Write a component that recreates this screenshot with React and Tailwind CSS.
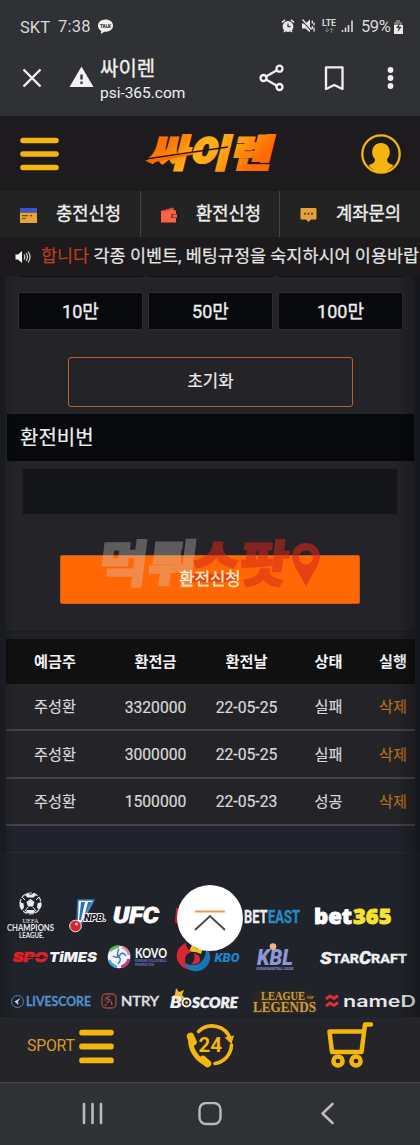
import React from "react";

const SANS = "font-[Roboto,'Noto_Sans_CJK_KR',sans-serif]";

/* Text inside a drawing, fitted to a given width */
function Label({ x, y, w, size, children, ...rest }) {
  return (
    <text x={x} y={y} fontSize={size} textLength={w} lengthAdjust="spacingAndGlyphs" {...rest}>
      {children}
    </text>
  );
}

function StatusBar() {
  return (
    <div className="flex h-[46px] items-start px-5 pt-[17px] text-[#d9d9db]">
      <span className="mt-px w-[38px] text-[16.500px] leading-5">SKT</span>
      <span className="w-[39px] text-[16.500px] leading-5 tracking-[0.2px]">7:38</span>
      <svg width="17" height="18" viewBox="0 0 17 18" className="mt-px">
        <path d="M8.500 1.500C4 1.500 1 4.300 1 7.700c0 2.200 1.300 4 3.200 5.100L3.800 16l3.500-2.300c4.800.4 8.700-2.300 8.700-6S13 1.500 8.500 1.500z" fill="#f0f0f0" />
        <Label x="3" y="9.700" w="11" size="5" fontWeight="900" fill="#303134">TALK</Label>
      </svg>
      <svg width="82" height="20" viewBox="279 0 82 20" className="ml-auto">
        <g fill="none" stroke="#e8e8ea" strokeWidth="1.600">
          <circle cx="288" cy="9.500" r="4.600" fill="#e8e8ea" />
          <path d="M282 5.500l3-2.700M294 5.500l-3-2.700M284 15l1.500-1.700M292 15l-1.500-1.700" />
          <path d="M288 6.500v3.200h2.600" stroke="#303134" strokeWidth="1.200" />
        </g>
        <path d="M302 6.500h3.500l4.500-4v13l-4.500-4H302z" fill="#e8e8ea" />
        <path d="M302 3l11 12" stroke="#303134" strokeWidth="2" />
        <path d="M302.500 2.500l9 10M312.300 3.500v3M314 5.500v3M312.300 9v3M314 10.500v4" stroke="#e8e8ea" strokeWidth="1.300" />
        <Label x="322" y="8.500" w="14" size="8.500" fontWeight="700" fill="#d9d9db">LTE</Label>
        <path d="M327 10v5m-2-2l2 2 2-2M331.500 16v-5m-2 2l2-2 2 2" stroke="#77787b" fill="none" />
        <path d="M342.500 15v-2M345.500 15v-4.500M348.500 15V8M352 15V3.500" stroke="#d9d9db" strokeWidth="1.600" />
      </svg>
      <span className="w-[32px] text-[16.500px] leading-5 tracking-[-0.4px]">59%</span>
      <svg width="11" height="18" viewBox="0 0 11 18" className="mr-[-4px] mt-px">
        <path d="M3 4V2h4v2h2v3.500H1V4z" fill="#7b7c7f" />
        <path d="M1 7h9v9H1z" fill="#e8e8ea" />
        <path d="M6.800 5L3.200 10h2.500l-1 4 4-5.300H6z" fill="#303134" />
      </svg>
    </div>
  );
}

function AddressBar() {
  return (
    <div className="flex h-[70px] items-start">
      <svg width="100" height="70" viewBox="0 46 100 70">
        <path d="M23.500 69.500l17 17M40.500 69.500l-17 17" stroke="#f2f2f2" strokeWidth="2.400" />
        <path d="M81.500 66.500L93.500 87h-24z" fill="#f2f2f2" />
        <path d="M81.500 74.500v5M81.500 81.500v2.500" stroke="#303134" strokeWidth="2.300" />
      </svg>
      <div className="flex w-[150px] flex-col pt-[10px] text-[#f0f0f1]">
        <span className="text-[20px] leading-[26px] [-webkit-text-stroke:0.3px]">싸이렌</span>
        <span className="mt-px text-[15.500px] leading-5 tracking-[-0.02px]">psi-365.com</span>
      </div>
      <svg width="170" height="70" viewBox="250 46 170 70" fill="none" stroke="#f2f2f2" strokeWidth="2.300">
        <path d="M276.500 70.500l-10.500 6M276.500 85.500l-10.500-6" />
        <circle cx="279.500" cy="68.700" r="3" />
        <circle cx="263.500" cy="78" r="3" />
        <circle cx="279.500" cy="87" r="3" />
        <path d="M326 67.300h16.500V89l-8.250-4L326 89z" strokeLinejoin="round" />
        <g fill="#f2f2f2" stroke="none">
          <circle cx="390.500" cy="70" r="2.900" />
          <circle cx="390.500" cy="78" r="2.900" />
          <circle cx="390.500" cy="86" r="2.900" />
        </g>
      </svg>
    </div>
  );
}

function Menu({ className }) {
  return (
    <svg viewBox="0 0 39 34" preserveAspectRatio="none" className={className}>
      <path d="M3 3.500h33M3 17h33M3 30.500h33" stroke="#f3b60f" strokeWidth="5.600" strokeLinecap="round" />
    </svg>
  );
}

function SiteHeader() {
  return (
    <div className="flex h-[75px] items-center justify-between bg-[#1d1b1d] pr-[19px] pl-5">
      <Menu className="h-[34px] w-[39px]" />
      <svg width="134" height="44" viewBox="0 0 134 44" className="ml-[2px] overflow-visible">
        <defs>
          <linearGradient id="flame" x1="0" x2="1" y1="0" y2="0.3">
            <stop offset="0" stopColor="#ff6a00" />
            <stop offset="0.25" stopColor="#ff7a00" />
            <stop offset="0.5" stopColor="#ffb21a" />
            <stop offset="0.75" stopColor="#ff9d12" />
            <stop offset="1" stopColor="#ff6a00" />
          </linearGradient>
        </defs>
        <g transform="translate(10 0) skewX(-14)">
          <Label x="1" y="35" w="124" size="38" fontWeight="900" fill="url(#flame)" stroke="url(#flame)" strokeWidth="2" fontFamily="Noto Sans CJK KR, sans-serif">싸이렌</Label>
        </g>
        <path d="M2 27L84 15" stroke="#1d1b1d" strokeWidth="1.500" />
        <path d="M1 28.500L50 20.500v2L6 31z" fill="#ff6a00" />
      </svg>
      <svg width="40" height="40" viewBox="0 0 40 40">
        <circle cx="20" cy="20" r="18.700" fill="none" stroke="#f3b60f" strokeWidth="2.300" />
        <path d="M20 9c-5.500 0-8.800 4-8.800 9 0 3 1 5.500 2.800 7.300 0 3-1.500 4-6.500 6C10.500 35.200 15 38.500 20 38.500s9.500-3.300 12.500-7.200c-5-2-6.500-3-6.500-6 1.800-1.800 2.800-4.300 2.800-7.300 0-5-3.300-9-8.800-9z" fill="#f3b60f" />
      </svg>
    </div>
  );
}

function QuickTabs() {
  return (
    <div className="flex h-[46px] bg-[#242323] text-[17.700px] text-[#efefef] [-webkit-text-stroke:0.35px]">
      <div className="flex w-[141px] items-center border-r border-[#434244] pl-5">
        <svg width="17" height="15" viewBox="0 0 17 15" className="mt-[2px] mr-[19px]">
          <path d="M0 0h17v4H0z" fill="#3a55cf" />
          <path d="M0 4.500h17V15H0z" fill="#e5a33c" />
          <path d="M2 7.700h6M10 7.700h2M2 10.500h4" stroke="#6e4a18" strokeWidth="1.200" />
        </svg>
        <span>충전신청</span>
      </div>
      <div className="flex w-[139px] items-center border-r border-[#434244] pl-5">
        <svg width="16" height="16" viewBox="0 0 16 16" className="mt-[2px] mr-[19px]">
          <path d="M0 4l12-3.500 1.500 3H15V7h-4.500v4H15v4.500H0z" fill="#fa6145" />
          <path d="M11.500 7.500H16v3h-4.500z" fill="#fa6145" />
          <path d="M2.500 4L12 1.500l1 2.300" stroke="#a33b2b" strokeWidth=".8" fill="none" />
        </svg>
        <span>환전신청</span>
      </div>
      <div className="flex flex-1 items-center pl-5">
        <svg width="17" height="15" viewBox="0 0 17 15" className="mt-[2px] mr-[19px]">
          <path d="M1.500 0h14q1 0 1 1v9.500q0 1-1 1H11L8.500 14 6 11.500H1.500q-1 0-1-1V1q0-1 1-1z" fill="#e5a33c" />
          <path d="M4 5.700h2M7.500 5.700h2M11 5.700h2" stroke="#714a15" strokeWidth="2" />
        </svg>
        <span>계좌문의</span>
      </div>
    </div>
  );
}

function Notice() {
  return (
    <div className="flex h-[39px] items-start overflow-hidden bg-[#1c1a1c] pt-[7px] pl-[15px] whitespace-nowrap">
      <svg width="17" height="16" viewBox="0 0 17 16" className="mt-[5px] mr-[9px] shrink-0" fill="none" stroke="#d8d8d8" strokeWidth="1.200">
        <path d="M.5 5.500H3L7 2v12l-4-3.500H.5z" fill="#f1f1f1" stroke="none" />
        <path d="M9 5.500q1.500 2.500 0 5M11 4q2.800 4 0 8M13 2.500q4 5.500 0 11" />
      </svg>
      <span className="text-[17.450px] leading-[25px] text-[#e6e6e6] [-webkit-text-stroke:0.2px]">
        <span className="text-[#bd3d20]">합니다</span> 각종 이벤트, 베팅규정을 숙지하시어 이용바랍
      </span>
    </div>
  );
}

function Watermark() {
  return (
    <svg width="222" height="50" viewBox="0 0 222 50" className="pointer-events-none absolute top-[-13px] left-[38px] overflow-visible" fontFamily="Noto Sans CJK KR, sans-serif" fontWeight="900">
      <g transform="translate(8 0) skewX(-7)">
        <Label x="-4" y="40" w="98" size="50" fill="#d0d0d0" stroke="#d0d0d0" strokeWidth="2" opacity=".33">먹튀</Label>
      </g>
      <g transform="translate(8 0) skewX(-7)">
        <Label x="88" y="40" w="98" size="50" fill="#d8281c" stroke="#d8281c" strokeWidth="1.500" opacity=".52">스팟</Label>
      </g>
      <path fillRule="evenodd" d="M208 1c-8 0-14 6-14 13.500 0 8 9 19 14 30 5-11 14-22 14-30C222 7 216 1 208 1zm0 7.500a7 7 0 1 1 0 14 7 7 0 0 1 0-14z" fill="#d8281c" opacity=".58" />
    </svg>
  );
}

function WithdrawForm() {
  return (
    <section className="mx-[6px] h-[356px] rounded-b-[3px] border-b border-[#1a1c21] bg-[#242327] text-[#ededee]">
      <div className="flex gap-[6px] pl-[12.500px]">
        {[0, 1, 2].map((i) => (
          <div key={i} className="h-px w-[124px] bg-[#0c0d10]" />
        ))}
      </div>
      <div className="mt-[14.500px] flex gap-[5px] pl-[12px] text-[18px] [-webkit-text-stroke:0.35px]">
        {["10만", "50만", "100만"].map((t) => (
          <button key={t} className="h-[38px] w-[125px] rounded-[2px] border border-[#2c2c31] bg-[#08090c] pt-px">{t}</button>
        ))}
      </div>
      <button className="mt-[27.500px] ml-[62px] block h-[50px] w-[285px] rounded-[3px] border border-[#b96231] text-[16.700px] [-webkit-text-stroke:0.2px]">초기화</button>
      <div className="mt-[7px] ml-px flex h-[47px] items-center bg-[#08090c] pl-[13px] text-[20px] [-webkit-text-stroke:0.2px]">환전비번</div>
      <div className="mt-[7px] ml-[16px] h-[47px] w-[376px] rounded-[2px] border border-[#202127] bg-[#14161a]" />
      <div className="relative mt-[40px] ml-[54px] h-[49px] w-[300px]">
        <button className="h-full w-full rounded-[2px] border border-[#c55a19] bg-[#ff6805] text-[16.700px] text-[#fff0d0] [-webkit-text-stroke:0.3px]">
          <span className="relative z-10">환전신청</span>
        </button>
        <Watermark />
      </div>
    </section>
  );
}

const rows = [
  ["주성환", "3320000", "22-05-25", "실패"],
  ["주성환", "3000000", "22-05-25", "실패"],
  ["주성환", "1500000", "22-05-23", "성공"],
];

function History() {
  const cols = "grid grid-cols-[99px_102px_80px_84px_45px] items-center text-center";
  return (
    <section className="mx-[5.500px] mt-[7px] text-[15.200px] text-[#d9d9db]">
      <div className={`${cols} h-[45px] bg-[#101011] pt-px font-bold text-[#f2f2f2]`}>
        {["예금주", "환전금", "환전날", "상태", "실행"].map((t) => (
          <span key={t}>{t}</span>
        ))}
      </div>
      {rows.map((r) => (
        <div key={r[1]} className={`${cols} h-[47.300px] border-b-2 border-[#424348] bg-[#242328] pt-[2px] [-webkit-text-stroke:0.2px]`}>
          <span>{r[0]}</span>
          <span className="text-[15.700px]">{r[1]}</span>
          <span className="text-[15.700px]">{r[2]}</span>
          <span>{r[3]}</span>
          <span className="text-[#b56d22]">삭제</span>
        </div>
      ))}
    </section>
  );
}

function LogoRowOne() {
  return (
    <div className="flex h-[54px] items-start">
      <svg width="60" height="54" viewBox="0 888 60 54" fill="#e8eaec">
        <circle cx="30.500" cy="904.500" r="10.500" fill="none" stroke="#d7d9dc" strokeWidth="1.200" strokeDasharray="5 1.500" />
        <path d="M30.500 900l4 3-1.500 4.500h-5l-1.500-4.500zM27 894l3.500 2 3.500-2 2 2-2.500 2.500h-6L25 896zM20 903l3.500 1.500.5 4-2 2.500-2.500-4zM41 903l-3.500 1.500-.5 4 2 2.500 2.500-4zM27 911h7l1.500 2.500-5 1-5-1z" />
        <path d="M22 898l3 3M39 898l-3 3M28 908l-3 4M33 908l3 4" stroke="#e8eaec" />
        <Label x="22.500" y="923.500" w="16" size="6.500" fontWeight="400" fontFamily="Liberation Serif, serif">UEFA</Label>
        <Label x="7" y="932" w="47" size="8.500" fontWeight="700" fontFamily="Lato, sans-serif">CHAMPIONS</Label>
        <Label x="19" y="938.500" w="25" size="6.500" fontWeight="700" fontFamily="Lato, sans-serif">LEAGUE.</Label>
      </svg>
      <svg width="52" height="54" viewBox="60 888 52 54">
        <path d="M78 901h16l-12 23h-5z" fill="#fff" stroke="#2f70b8" strokeWidth="1.600" />
        <path d="M81 903h4l-4 18h-2zM88 903h4l-8 15z" fill="#2f70b8" />
        <circle cx="75.500" cy="927" r="5.800" fill="#d92332" stroke="#f0f0f0" strokeWidth="1" />
        <circle cx="76.500" cy="925" r="1.500" fill="#f3c6c9" />
        <Label x="84" y="921.500" w="22" size="9.500" fontWeight="900" fontStyle="italic" fill="#15151a" stroke="#f0f0f0" strokeWidth="2" paintOrder="stroke">NPB.</Label>
      </svg>
      <svg width="118" height="54" viewBox="112 888 118 54">
        <Label x="113" y="924" w="46" size="22" fontWeight="900" fontStyle="italic" fill="#fff" stroke="#fff" strokeWidth=".8">UFC</Label>
        <path d="M176 909h20v15h-21z" fill="#d71928" />
      </svg>
      <svg width="80" height="54" viewBox="230 888 80 54" fontWeight="700" fontFamily="Roboto, sans-serif">
        <Label x="244" y="923.500" w="23.500" size="18.500" fill="#eceef0" stroke="#eceef0" strokeWidth=".3">BET</Label>
        <Label x="268" y="923.500" w="32" size="18.500" fill="#248dc9" stroke="#248dc9" strokeWidth=".3">EAST</Label>
      </svg>
      <svg width="100" height="54" viewBox="310 888 100 54" fontWeight="900" fontFamily="Open Sans, sans-serif">
        <Label x="314" y="925" w="38" size="21" fill="#fff" stroke="#fff" strokeWidth=".8">bet</Label>
        <Label x="353" y="925" w="38.500" size="21" fill="#f6e42c" stroke="#f6e42c" strokeWidth=".8">365</Label>
      </svg>
    </div>
  );
}

function LogoRowTwo() {
  return (
    <div className="flex h-[40px] items-start">
      <svg width="103" height="40" viewBox="0 942 103 40" fontWeight="900" fontStyle="italic" fontFamily="Inter, sans-serif">
        <Label x="12.500" y="963" w="35" size="13.500" fill="#dc2129" stroke="#dc2129" strokeWidth=".6">SPO</Label>
        <Label x="49" y="963" w="48" size="13.500" fill="#f2f2f3">TiMES</Label>
        <path d="M27 958.500h20" stroke="#20232a" />
      </svg>
      <svg width="70" height="40" viewBox="103 942 70 40">
        <circle cx="119" cy="958" r="11.300" fill="#eef4f6" />
        <g fill="none" strokeWidth="2.800">
          <path d="M110 952q3-4 9-4.500" stroke="#5bb75b" />
          <path d="M122 948q6 2 7 8" stroke="#e48a9e" />
          <path d="M129 960q-2 6-8 8" stroke="#c8327f" />
          <path d="M117 968q-6-2-8-7" stroke="#45a5d8" />
          <path d="M113 957q4 3 7-1t6 1M119 950q-3 5 0 8t-1 7" stroke="#426fa6" strokeWidth="1.400" />
        </g>
        <Label x="135" y="959" w="32" size="12.500" fontWeight="900" fontFamily="Lato, sans-serif" fill="#f0f1f3">KOVO</Label>
        <Label x="135" y="963.300" w="32" size="3" fontWeight="700" fill="#6b6cc0">KOREAN VOLLEYBALL</Label>
        <Label x="135" y="967.200" w="19" size="3" fontWeight="700" fill="#6b6cc0">FEDERATION</Label>
      </svg>
      <svg width="77" height="40" viewBox="173 942 77 40">
        <path d="M193 944q1 8 10 5l-2 6q-8-4-13-1z" fill="#f5c221" />
        <path d="M186 944q-11 5-9 16 3 10 15 11-7-5-7-10 0-6 7-9-6-1-6-8z" fill="#dd2435" />
        <path d="M184 964q4 10 14 8 10-2 12-12 1-6-4-11 1 9-6 15-6 4-16 0z" fill="#1a74b8" />
        <path d="M194 954q7 2 6 8-3 4-9 3 5-3 3-11z" fill="#dd2435" />
        <Label x="214.500" y="963" w="25" size="12" fontWeight="900" fontStyle="italic" fill="#1d87c9">KBO</Label>
      </svg>
      <svg width="64" height="40" viewBox="250 942 64 40">
        <Label x="257" y="966" w="36" size="22" fontWeight="900" fontStyle="italic" fill="#8e96d8">KBL</Label>
        <circle cx="273" cy="947.500" r="3.300" fill="#f4b183" />
        <Label x="256.500" y="970.500" w="37" size="3" fontWeight="700" fill="#8e96d8">KOREAN BASKETBALL LEAGUE</Label>
      </svg>
      <svg width="106" height="40" viewBox="314 942 106 40" fill="#f0f1f2" stroke="#f0f1f2" strokeWidth=".4" fontWeight="700">
        <Label x="320" y="964.500" w="12" size="17" fontStyle="italic" fontWeight="900">S</Label>
        <Label x="332" y="963.500" w="27" size="13.500">TAR</Label>
        <Label x="359" y="965" w="12" size="18" fontStyle="italic" fontWeight="900">C</Label>
        <Label x="371" y="963.500" w="36" size="13.500">RAFT</Label>
      </svg>
    </div>
  );
}

function LogoRowThree() {
  return (
    <div className="flex h-[35px] items-start">
      <svg width="98" height="35" viewBox="0 982 98 35">
        <circle cx="17.500" cy="1002.500" r="6" fill="none" stroke="#4c82b8" />
        <path d="M20.500 999l-6 3.500 4 3.500-.5-3.500z" fill="#bcd8ee" />
        <Label x="26" y="1007" w="65" size="12.500" fontFamily="Lato, sans-serif" fontWeight="700" fill="#508fcb" stroke="#508fcb" strokeWidth=".3">LIVESCORE</Label>
      </svg>
      <svg width="70" height="35" viewBox="98 982 70 35">
        <rect x="102" y="995" width="14" height="14" rx="4" fill="none" stroke="#a3483f" strokeWidth="1.300" />
        <path d="M110 997l-4 2 4 2-3 3M111 1002l1 4M106 1005l-1 2M104.500 1001h2" stroke="#b44b42" strokeWidth="1.200" fill="none" />
        <Label x="121" y="1007" w="38" size="12.500" fontFamily="Lato, sans-serif" fill="#e1e2e4" stroke="#e1e2e4" strokeWidth=".5">NTRY</Label>
      </svg>
      <svg width="80" height="35" viewBox="168 982 80 35">
        <path d="M176 989l3 4 5-2-2 5 4 4-6-.5-2.500 5-1.500-5-5-1 4-3z" fill="#f0bd3a" />
        <Label x="170" y="1008.500" w="12" size="16" fontWeight="900" fontStyle="italic" fill="#f0f1f2">B</Label>
        <circle cx="186.500" cy="1003.500" r="4" fill="none" stroke="#f0f1f2" strokeWidth="2" />
        <circle cx="186.500" cy="1003.500" r="1.500" fill="#f0bd3a" />
        <Label x="192" y="1008.500" w="46" size="15" fontWeight="800" fontStyle="italic" fontFamily="Lato, sans-serif" fill="#f0f1f2" stroke="#f0f1f2" strokeWidth=".4">SCORE</Label>
      </svg>
      <svg width="74" height="35" viewBox="248 982 74 35" fontFamily="Liberation Serif, serif" fontWeight="700" fill="#c69b4d" stroke="#4d3713" strokeWidth="1" paintOrder="stroke">
        <path d="M257 992h51l9 13-4 7h-57l-4-8z" fill="#33291b" stroke="none" opacity=".7" />
        <Label x="261" y="1000.500" w="44" size="12">LEAGUE</Label>
        <Label x="253" y="1012.500" w="63" size="15">LEGENDS</Label>
        <Label x="307" y="1000" w="7" size="4.500" strokeWidth=".4">OF</Label>
      </svg>
      <svg width="98" height="35" viewBox="322 982 98 35" fill="none" strokeLinejoin="round">
        <path d="M326 1000l4-3 4 2.500 4-3M326 1007l4-3 4 2.500 4-3" stroke="#df2c35" strokeWidth="3" />
        <Label x="343" y="1008" w="73" size="16" fontFamily="Inter, sans-serif" fontWeight="600" fill="#e6e7e9">nameD</Label>
      </svg>
    </div>
  );
}

function BottomBar() {
  return (
    <div className="flex h-[65px] items-start bg-[#252428]">
      <span className="mt-[18px] ml-[27px] w-[52px] text-[15.800px] leading-[22px] tracking-[-0.2px] text-[#d99c24]">SPORT</span>
      <Menu className="mt-[12px] h-[35px] w-[35px]" />
      <svg width="50" height="50" viewBox="185 1020 50 50" className="mt-[3px] ml-[71px]" fill="none" stroke="#f3b60f" strokeWidth="3.600" strokeLinecap="round">
        <path d="M198.500 1031.500A19.500 19.500 0 0 1 230.500 1039" />
        <path d="M231.500 1045A19.500 19.500 0 0 1 215 1063.500" />
        <path d="M224.500 1037.500l9.500-2-2.500 8.500z" fill="#f3b60f" stroke="none" />
        <path d="M191 1037c-2 11 5 22 16 27" strokeWidth="5" />
        <path d="M190.500 1036.500l2.500 5.500M203 1059.500l4.500 4" strokeWidth="7.500" />
        <Label x="198.500" y="1051.500" w="23.500" size="20" fontWeight="700" fill="#f3b60f" stroke="none">24</Label>
      </svg>
      <svg width="50" height="52" viewBox="325 1019 50 52" className="mt-[2px] ml-[90px]" fill="none" stroke="#f3b60f" strokeWidth="4.500" strokeLinecap="round" strokeLinejoin="round">
        <path d="M371 1024.500h-6l-3.500 27.500H332l-2.500-20.500H363" />
        <circle cx="338" cy="1061" r="4.600" />
        <circle cx="356" cy="1061" r="4.600" />
      </svg>
    </div>
  );
}

function SystemNav() {
  return (
    <div className="flex h-[63px] justify-between border-t border-[#454448] bg-[#303134] pt-[19px] pr-[82px] pl-[80px]">
      <svg width="26" height="24" viewBox="0 0 26 24">
        <path d="M4 2v19M12.500 2v19M21 2v19" stroke="#b9babe" strokeWidth="2.600" strokeLinecap="round" />
      </svg>
      <svg width="24" height="24" viewBox="0 0 24 24" className="mr-[6px]">
        <rect x="1.500" y="1" width="21" height="21" rx="6.500" fill="none" stroke="#b9babe" strokeWidth="2.400" />
      </svg>
      <svg width="18" height="24" viewBox="0 0 18 24">
        <path d="M12.500 2L2.500 11.500l10 9.500" fill="none" stroke="#b9babe" strokeWidth="2.600" strokeLinecap="round" strokeLinejoin="round" />
      </svg>
    </div>
  );
}

export default function App() {
  return (
    <div className={`relative h-[1145px] w-[420px] overflow-hidden bg-[#1c1f26] ${SANS}`}>
      <header className="bg-[#303134]">
        <StatusBar />
        <AddressBar />
      </header>
      <SiteHeader />
      <QuickTabs />
      <Notice />
      <main className="relative h-[741px] bg-[#1d2027]">
        <WithdrawForm />
        <History />
        <div className="mx-[6px] h-[27px] border-b border-[#2b2c32] bg-[#20232b]" />
        <div className="h-[162px] bg-[#20232a] pt-[34px]">
          <LogoRowOne />
          <LogoRowTwo />
          <LogoRowThree />
        </div>
        <div className="pointer-events-none absolute inset-y-0 right-0 w-6 bg-linear-to-l from-black/30 to-transparent" />
        <div className="pointer-events-none absolute inset-y-0 left-0 w-4 bg-linear-to-r from-black/20 to-transparent" />
        <button className="absolute top-[609px] left-[177px] size-[66px] rounded-full bg-white">
          <svg width="66" height="66" viewBox="0 0 66 66" fill="none">
            <path d="M18 26.500h30" stroke="#e89a50" strokeWidth="2" />
            <path d="M18 45l15-14 15 14" stroke="#4a4a4a" strokeWidth="2" />
          </svg>
        </button>
      </main>
      <BottomBar />
      <SystemNav />
    </div>
  );
}
